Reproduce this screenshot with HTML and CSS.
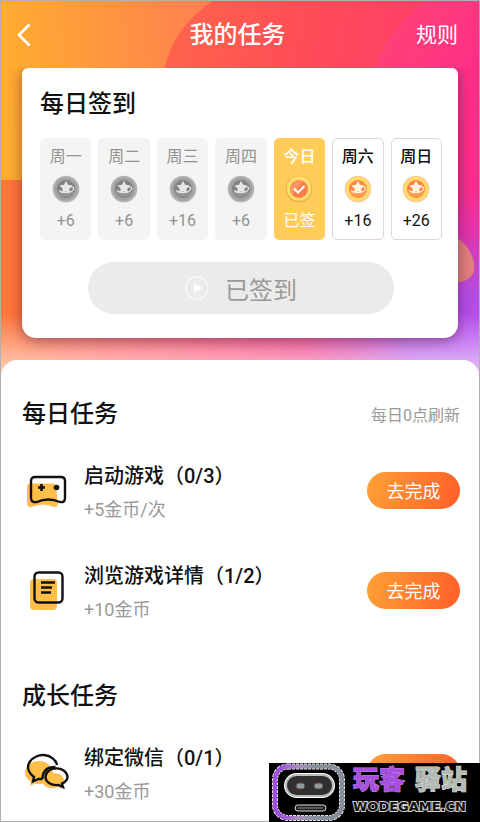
FILE: index.html
```html
<!DOCTYPE html>
<html lang="zh-CN">
<head>
<meta charset="utf-8">
<meta name="viewport" content="width=device-width, initial-scale=1">
<title>我的任务</title>
<link rel="stylesheet" href="styles.css">
</head>
<body>
<svg class="defs" aria-hidden="true">
  <defs>
    <path id="star" d="M14 5.700l2 4.100 4.500.8-3.200 3.200.7 4.500-4-2-4 2 .7-4.500-3.200-3.200 4.500-.8z"/>
    <symbol id="coin-grey" viewBox="0 0 28 28">
      <circle cx="14" cy="14" r="13.300" fill="#b4b4b4"/>
      <circle cx="14" cy="14" r="11.500" fill="#a2a2a2"/>
      <circle cx="14" cy="14" r="9" fill="#808080"/>
      <path d="M6 17a9 9 0 0 0 16 0z" fill="#949494"/>
      <use href="#star" fill="#e6e6e6"/>
      <path d="M7 15.500c3 3 12 2.500 14-.5s-1-3.500-2.500-3" fill="none" stroke="#e6e6e6" stroke-width="1.300"/>
    </symbol>
    <symbol id="coin-gold" viewBox="0 0 28 28">
      <circle cx="14" cy="14" r="13.300" fill="#ffc5a0"/>
      <circle cx="14" cy="14" r="12.200" fill="#ffdc66"/>
      <circle cx="14" cy="14" r="9" fill="#ff8348"/>
      <path d="M6 17a9 9 0 0 0 16 0z" fill="#ff9c55"/>
      <use href="#star" fill="#fff6df"/>
      <path d="M7 15.500c3 3 12 2.500 14-.5s-1-3.500-2.500-3" fill="none" stroke="#fff0cf" stroke-width="1.300"/>
    </symbol>
    <symbol id="coin-check" viewBox="0 0 28 28">
      <circle cx="14" cy="14" r="13.300" fill="#f0ae4b"/>
      <circle cx="14" cy="13.500" r="12.200" fill="#ffdf6c"/>
      <circle cx="14" cy="14" r="9" fill="#fb7b49"/>
      <path d="M6 10a9 9 0 0 1 12-4L7.500 20A9 9 0 0 1 6 10z" fill="#ff9363"/>
      <path d="M9 13.500l4 4 6.500-6.500" fill="none" stroke="#fff" stroke-width="2.200"/>
    </symbol>
  </defs>
</svg>
<div class="page">
  <div class="hero">
    <svg class="hero-art" viewBox="0 0 480 384" preserveAspectRatio="none" aria-hidden="true">
      <defs>
        <linearGradient id="g-base" gradientUnits="userSpaceOnUse" x1="0" y1="20" x2="210" y2="0"><stop offset="0" stop-color="#ffac30"/><stop offset="1" stop-color="#ff7f50"/></linearGradient>
        <linearGradient id="g-red" gradientUnits="userSpaceOnUse" x1="165" y1="0" x2="420" y2="50"><stop offset="0" stop-color="#ff664b"/><stop offset=".5" stop-color="#ff4f55"/><stop offset="1" stop-color="#ff3e68"/></linearGradient>
        <linearGradient id="g-pink" gradientUnits="userSpaceOnUse" x1="380" y1="0" x2="480" y2="60"><stop offset="0" stop-color="#ff4672"/><stop offset="1" stop-color="#ff2f86"/></linearGradient>
        <linearGradient id="g-low"><stop offset="0" stop-color="#ff7838"/><stop offset=".25" stop-color="#ff5a5c"/><stop offset=".6" stop-color="#f6387c"/><stop offset="1" stop-color="#d838b8"/></linearGradient>
        <linearGradient id="g-side" x2="0" y2="1"><stop offset="0" stop-color="#ff2f86"/><stop offset=".5" stop-color="#fb2c8c"/><stop offset=".78" stop-color="#d53abf"/><stop offset="1" stop-color="#b44df0"/></linearGradient>
        <radialGradient id="g-purple" gradientUnits="userSpaceOnUse" cx="0" cy="0" r="1" gradientTransform="translate(480 340) scale(180 110)"><stop offset="0" stop-color="#b44df0"/><stop offset=".4" stop-color="#b44de6"/><stop offset="1" stop-color="#d83cae" stop-opacity="0"/></radialGradient>
        <linearGradient id="g-fade" x2="0" y2="1"><stop offset="0" stop-color="#fff" stop-opacity="0"/><stop offset="1" stop-color="#fff" stop-opacity=".75"/></linearGradient>
      </defs>
      <rect width="480" height="384" fill="url(#g-base)"/>
      <path d="M213 0Q174 25 164 68V190H480V0z" fill="url(#g-red)"/>
      <path d="M430 0Q388 26 376 68V190H480V0z" fill="url(#g-pink)"/>
      <path d="M0 180H480V384H0z" fill="url(#g-low)"/>
      <path d="M440 68H480V310H440z" fill="url(#g-side)"/>
      <rect x="250" y="220" width="230" height="164" fill="url(#g-purple)"/>
      <path d="M440 234Q462 234 472 254Q484 281 454 284z" fill="#e0807c"/>
      <rect y="314" width="480" height="70" fill="url(#g-fade)"/>
    </svg>
    <header class="topbar">
      <button class="back" type="button" aria-label="返回">
        <svg viewBox="0 0 14 24" aria-hidden="true"><path d="M12.500 1.500L2 12l10.500 10.500" fill="none" stroke="#fff" stroke-width="2.600"/></svg>
      </button>
      <h1>我的任务</h1>
      <a class="rules" href="#rules">规则</a>
    </header>
    <div class="stage">
      <section class="card">
        <h2>每日签到</h2>
        <ol class="days">
          <li class="day"><span>周一</span><svg><use href="#coin-grey"/></svg><span>+6</span></li>
          <li class="day"><span>周二</span><svg><use href="#coin-grey"/></svg><span>+6</span></li>
          <li class="day"><span>周三</span><svg><use href="#coin-grey"/></svg><span>+16</span></li>
          <li class="day"><span>周四</span><svg><use href="#coin-grey"/></svg><span>+6</span></li>
          <li class="day today"><span>今日</span><svg><use href="#coin-check"/></svg><span>已签</span></li>
          <li class="day next"><span>周六</span><svg><use href="#coin-gold"/></svg><span>+16</span></li>
          <li class="day next"><span>周日</span><svg><use href="#coin-gold"/></svg><span>+26</span></li>
        </ol>
        <button class="signed" type="button">
          <svg viewBox="0 0 24 24" aria-hidden="true"><circle cx="12" cy="12" r="11" fill="none" stroke="#fafafa" stroke-width="1.300"/><path d="M9.500 7.500v9l7-4.500z" fill="#fff" stroke="#fff" stroke-linejoin="round"/></svg>
          已签到
        </button>
      </section>
    </div>
  </div>

  <main class="sheet">
    <section>
      <div class="heading"><h2>每日任务</h2><span class="note">每日0点刷新</span></div>
      <ul class="tasks">
        <li class="task">
          <svg class="icon" viewBox="1 -2 48 48" aria-hidden="true">
            <path d="M8 15.500h23q4 0 4 4l2 16q0 4-4 3.500-11-5-22 0-5 1-5-4V19q0-3.500 4-3.500z" fill="#ffbf49"/>
            <path d="M14 9h26q4 0 4 4v17q0 5-5 4-12-5-23 0-6 1-6-4V13q0-4 4-4z" fill="none" stroke="#111" stroke-width="2.400"/>
            <path d="M17 19.500h7M20.500 16v7" stroke="#111" stroke-width="2.600"/><circle cx="35.500" cy="19.500" r="2.800" fill="#111"/>
          </svg>
          <div class="info"><h3>启动游戏（0/3）</h3><p>+5金币/次</p></div>
          <button class="go" type="button">去完成</button>
        </li>
        <li class="task">
          <svg class="icon" viewBox="1 -2 48 48" aria-hidden="true">
            <rect x="9" y="11" width="27" height="31" rx="4" fill="#ffbf49"/>
            <rect x="13.500" y="4.500" width="28" height="30" rx="4" fill="none" stroke="#111" stroke-width="2.400"/>
            <path d="M20 14.500h14M20 19.500h11M20 24.500h10" stroke="#111" stroke-width="2.600"/>
          </svg>
          <div class="info"><h3>浏览游戏详情（1/2）</h3><p>+10金币</p></div>
          <button class="go" type="button">去完成</button>
        </li>
      </ul>
    </section>
    <section>
      <div class="heading"><h2>成长任务</h2></div>
      <ul class="tasks">
        <li class="task">
          <svg class="icon" viewBox="1 0 48 48" aria-hidden="true">
            <path d="M18 13a14 11.500 0 0 0-8 21l-1 4 5-2.500q4 1 8 0 2 4 8 4.500 4 .5 7-1l4 2-1-4q3-3 3-6-2-6-11-6-3-12-14-12z" fill="#ffbf49"/>
            <path d="M21.500 31h-4L12 33.500l1-4.500C-1 18 13 6 23 7c7 .5 12 5 13 10M21.500 31c0-8 4-12 13-12" fill="none" stroke="#111" stroke-width="2.400"/>
            <path d="M41 35.500l1 3.500-4.500-2c-7 1-13-3-13-8 0-11 21-12 22 0 0 3-2 5-5.500 6.500z" fill="none" stroke="#111" stroke-width="2.400"/>
          </svg>
          <div class="info"><h3>绑定微信（0/1）</h3><p>+30金币</p></div>
          <button class="go" type="button">去完成</button>
        </li>
      </ul>
    </section>
  </main>
</div>

<aside class="mark">
  <svg viewBox="0 0 78 59" aria-hidden="true">
    <defs><linearGradient id="g-robot"><stop offset=".1" stop-color="#a050e0"/><stop offset=".35" stop-color="#a890b8"/><stop offset=".6" stop-color="#87909a"/></linearGradient></defs>
    <rect x="6" y="3.500" width="67" height="51.500" rx="13" fill="none" stroke="#fff" stroke-width="6" stroke-dasharray="3 1"/>
    <rect x="6" y="3.500" width="67" height="51.500" rx="13" fill="none" stroke="url(#g-robot)" stroke-width="4.500"/>
    <rect x="17" y="12" width="47" height="21" rx="10.500" fill="#303030" stroke="#fff" stroke-width="4"/>
    <rect x="17" y="12" width="47" height="21" rx="10.500" fill="#303030" stroke="#b9bebc" stroke-width="2"/>
    <rect x="27" y="20" width="9" height="6" rx="3" fill="#91989e" stroke="#654040"/>
    <rect x="45" y="20" width="9" height="6" rx="3" fill="#91989e" stroke="#654040"/>
    <rect x="26" y="42" width="31" height="6" rx="3" fill="#222" stroke="#ddd"/>
    <path d="M29 45h25" stroke="#888"/>
  </svg>
  <div class="mark-text">
    <strong><span>玩客</span><span class="silver">驿站</span></strong>
    <small>WODEGAME.CN</small>
  </div>
</aside>
</body>
</html>
```

FILE: styles.css
```css
* { box-sizing: border-box; }

body,
h1,
h2,
h3,
p,
ol,
ul { margin: 0; padding: 0; }

ol,
ul { list-style: none; }

body {
  position: relative;
  min-height: 100vh;
  background: #fff;
  color: #111;
  font-family: Roboto, "Noto Sans CJK SC", sans-serif;
}

button {
  padding: 0;
  border: 0;
  font-family: inherit;
}

svg { display: block; }

.defs { position: absolute; width: 0; height: 0; }

.page {
  min-height: 100vh;
  border: 1px solid #b0b0b0;
}

.hero { position: relative; }

.hero-art {
  position: absolute;
  inset: 0;
  width: 100%;
  height: 100%;
}

.topbar {
  position: relative;
  display: grid;
  grid-template-columns: 1fr auto 1fr;
  align-items: center;
  height: 67px;
  padding: 0 21px 0 16px;
  color: #fff;
}

.topbar h1 {
  font-size: 24px;
  font-weight: 500;
  line-height: 32px;
}

.back { background: none; width: 16px; }
.back svg { width: 14px; height: 24px; }

.rules {
  justify-self: end;
  color: #fff;
  font-size: 21px;
  line-height: 32px;
  text-decoration: none;
}

.stage {
  position: relative;
  overflow: hidden;
  padding: 0 21px 45px;
}

.card {
  padding: 20px 16px 24px 18px;
  border-radius: 6px 6px 14px 14px;
  background: #fff;
  box-shadow: 0 3px 14px rgba(60, 0, 40, 0.45);
}

h2 {
  font-size: 24px;
  font-weight: 500;
  line-height: 32px;
}

.days {
  display: grid;
  grid-template-columns: repeat(7, 1fr);
  gap: 7px;
  margin: 18px 0 22px;
}

.day {
  display: flex;
  flex-direction: column;
  align-items: center;
  justify-content: space-between;
  height: 102px;
  padding: 8px 0;
  border: 1px solid #f4f4f4;
  border-radius: 5px;
  background: #f4f4f4;
  color: #929292;
  font-size: 16px;
  line-height: 20px;
}

.day svg { width: 28px; height: 28px; }

.today {
  border-color: #ffcc5a;
  background: #ffcc5a;
  color: #fff;
}

.next {
  border-color: #d8d8d8;
  background: #fff;
  color: #111;
}

.today span:first-child,
.next span:first-child { font-weight: 500; }

.signed {
  display: flex;
  align-items: center;
  justify-content: center;
  gap: 16px;
  width: 76%;
  height: 52px;
  margin: 0 auto;
  border-radius: 26px;
  background: #ebebeb;
  color: #999;
  font-size: 24px;
}

.signed svg { width: 24px; height: 24px; }

.sheet {
  position: relative;
  margin-top: -23px;
  padding: 38px 19px 10px 21px;
  border-radius: 16px 16px 0 0;
  background: #fff;
}

.heading {
  display: flex;
  align-items: center;
  justify-content: space-between;
  margin-bottom: 24px;
}

.note { color: #999; font-size: 16px; }

.tasks { display: grid; gap: 28px; }

.sheet section + section { margin-top: 54px; }

.task {
  display: flex;
  align-items: center;
  height: 72px;
}

.icon { width: 48px; height: 48px; }

.info { flex: 1; margin-left: 14px; padding-top: 4px; }

h3 {
  margin-bottom: 8px;
  font-size: 20px;
  font-weight: 500;
  line-height: 28px;
}

.info p {
  color: #999;
  font-size: 18px;
  line-height: 24px;
}

.go {
  width: 93px;
  height: 37px;
  border-radius: 19px;
  background: linear-gradient(100deg, #ffa036, #ff5f28);
  color: #fff;
  font-size: 18px;
}

.mark {
  position: absolute;
  right: 0;
  bottom: 0;
  display: flex;
  gap: 6px;
  width: 211px;
  height: 59px;
  background: #000;
}

.mark svg { width: 78px; height: 59px; }

.mark-text { white-space: nowrap; }

.mark strong {
  display: flex;
  gap: 10px;
  color: #a84ee0;
  font-size: 26px;
  font-weight: 900;
  line-height: 34px;
  -webkit-text-stroke: 1px #c98aef;
  paint-order: stroke;
}

.mark .silver {
  color: #b4bab6;
  -webkit-text-stroke-color: #e4e8e4;
}

.mark small {
  display: block;
  color: #111;
  font-family: "DejaVu Sans", sans-serif;
  font-size: 13px;
  font-weight: 700;
  line-height: 20px;
  -webkit-text-stroke: 2px #d0d0d0;
  paint-order: stroke;
}
```
